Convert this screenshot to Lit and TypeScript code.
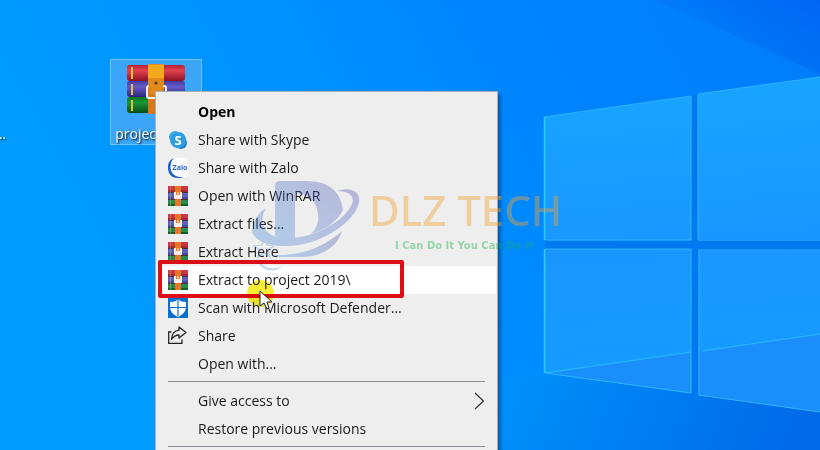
import { LitElement, html, css, svg, nothing } from "lit";
import { customElement } from "lit/decorators.js";
import { classMap } from "lit/directives/class-map.js";

const rarSmall = html`<svg class="glyph" viewBox="0 0 20 20" aria-hidden="true">
  <rect width="20" height="20" fill="#4a3040" />
  <rect y="0" width="20" height="6" fill="#cc3844" />
  <rect y="7" width="20" height="6" fill="#5f62b8" />
  <rect y="14" width="20" height="6" fill="#2a8a48" />
  <rect y="4" width="20" height="2" fill="#a02838" />
  <rect y="11" width="20" height="2" fill="#454a98" />
  <rect y="18" width="20" height="2" fill="#14602c" />
  <rect x="2" width="1" height="20" fill="#b8b070" opacity=".5" />
  <rect x="7" width="6" height="20" fill="#e8762a" />
  <path d="M6 6 H8 V9 H9.500 V6 H10.500 V9 H12 V6 H14 V13 H6Z" fill="#f6efe8" />
</svg>`;

const skype = html`<svg class="glyph" viewBox="0 0 20 20" aria-hidden="true">
  <circle cx="7" cy="7" r="6" fill="#38b0ec" />
  <circle cx="13" cy="13" r="6" fill="#1e7fd0" />
  <circle cx="10" cy="10" r="8" fill="#2b9fe4" />
  <text class="skype-mark" x="10" y="15" text-anchor="middle">S</text>
</svg>`;

const zalo = html`<svg class="glyph" viewBox="0 0 20 20" aria-hidden="true">
  <path d="M6 0 Q-1 3 0 11 Q1 20 10 20 H16 Q5 18 4 11 Q3 4 6 0Z" fill="#1d62c4" />
  <path d="M6 0 H16 Q20 0 20 4 V16 Q20 19 16 19 H11 Q3 17 2.500 10 Q2.500 3 6 0Z" fill="#fdfeff" />
  <text class="zalo-mark" x="12" y="12" text-anchor="middle">Zalo</text>
</svg>`;

const defender = html`<svg class="glyph" viewBox="0 0 20 20" aria-hidden="true">
  <rect width="20" height="20" fill="#0c6fd0" />
  <path d="M10 1.500 Q13 4 18 4 V9 Q18 15 10 19 Q2 15 2 9 V4 Q7 4 10 1.500Z" fill="#fff" />
  <path d="M10 2 V18 M2 9.500 H18" stroke="#0c6fd0" stroke-width="1.200" />
</svg>`;

const share = html`<svg class="glyph" viewBox="0 0 20 20" aria-hidden="true">
  <path d="M3.500 6 H0.700 V17.300 H14 V13.500" fill="none" stroke="#222" stroke-width="1.300" />
  <path d="M11 1 L18 6.500 L11 12 V9 Q6.500 9 3.500 13.500 Q4 5 11 4.200Z" fill="none" stroke="#222" stroke-width="1.300" stroke-linejoin="round" />
</svg>`;

type Entry = { label: string; icon?: unknown; bold?: boolean; hot?: boolean; sub?: boolean } | "line";

const ENTRIES: Entry[] = [
  { label: "Open", bold: true },
  { label: "Share with Skype", icon: skype },
  { label: "Share with Zalo", icon: zalo },
  { label: "Open with WinRAR", icon: rarSmall },
  { label: "Extract files...", icon: rarSmall },
  { label: "Extract Here", icon: rarSmall },
  { label: "Extract to project 2019\\", icon: rarSmall, hot: true },
  { label: "Scan with Microsoft Defender...", icon: defender },
  { label: "Share", icon: share },
  { label: "Open with..." },
  "line",
  { label: "Give access to", sub: true },
  { label: "Restore previous versions" },
  "line",
];

const pane = (d: string) => svg`<path d=${d} fill="url(#pane)" />`;

@customElement("desk-wallpaper")
class DeskWallpaper extends LitElement {
  static styles = css`
    :host { display: block; }
    .art { display: block; width: 100%; height: 100%; }
  `;
  render() {
    return html`<svg class="art" viewBox="0 0 820 450" preserveAspectRatio="xMidYMid slice" aria-hidden="true">
      <defs>
        <linearGradient id="sky" x1="0" y1=".3" x2="1" y2="0">
          <stop offset="0" stop-color="#009cff" />
          <stop offset=".35" stop-color="#0092ff" />
          <stop offset=".65" stop-color="#0084ff" />
          <stop offset="1" stop-color="#007cfa" />
        </linearGradient>
        <linearGradient id="corner" gradientUnits="userSpaceOnUse" x1="730" y1="40" x2="790" y2="-40">
          <stop offset="0" stop-color="#0064f0" stop-opacity=".25" />
          <stop offset="1" stop-color="#0060f0" stop-opacity=".9" />
        </linearGradient>
        <linearGradient id="floor" gradientUnits="userSpaceOnUse" x1="520" y1="370" x2="780" y2="480">
          <stop offset="0" stop-color="#0090fc" />
          <stop offset=".3" stop-color="#0084f4" />
          <stop offset="1" stop-color="#006ae8" />
        </linearGradient>
        <linearGradient id="pane" gradientUnits="userSpaceOnUse" x1="640" y1="90" x2="660" y2="400">
          <stop offset="0" stop-color="#17a4ff" />
          <stop offset=".5" stop-color="#1a97ff" />
          <stop offset="1" stop-color="#169cff" />
        </linearGradient>
      </defs>
      <rect width="820" height="450" fill="url(#sky)" />
      <path d="M655 0 H820 V74Z" fill="url(#corner)" />
      <path d="M498 378 L545 373 L820 412 V450 H498Z" fill="url(#floor)" />
      <path d="M545 241 H820 V249 H545Z M692 96 L698 94 V395 L692 394Z" fill="#0078f0" />
      ${pane("M544 117 L691 96 V240 H544Z")}
      ${pane("M698 94 L820 77 V241 H698Z")}
      ${pane("M544 249 H691 V393 L544 373Z")}
      ${pane("M699 249 H820 V412 L699 395Z")}
      <path d="M545 373 L691 352 V393Z M699 351 L820 333 V412 L699 395Z" fill="#1a8ffc" />
      <path d="M545 373 L691 352 M702 351 L820 334" stroke="#22b0ff" stroke-width="1.500" fill="none" />
      <path d="M544 117 L691 96 V240 H545 M698 240 V94 L820 77 M545 249 H691 V393 L545 373 M699 249 V395 L820 412" stroke="#2cb4ff" stroke-width="1" fill="none" />
      <path d="M544.500 117 V240 M544.500 249 V373" stroke="#2cd0ff" stroke-width="1.500" />
    </svg>`;
  }
}

@customElement("desk-file")
class DeskFile extends LitElement {
  static styles = css`
    :host { display: block; }
    .file {
      display: flex; flex-direction: column; align-items: center; gap: 10px;
      box-sizing: border-box; width: 100%; padding: 4px 0 0;
      border: 1px solid #6cc4ff; background: #3ba5f7;
      font: 14px/20px "Open Sans", "Noto Sans", sans-serif;
      color: #fff; text-shadow: 1px 1px 2px #000;
    }
    .art { width: 60px; height: 50px; }
  `;
  render() {
    return html`<button class="file">
      <svg class="art" viewBox="0 0 60 50" aria-hidden="true">
        <defs>
          <linearGradient id="r" x2="0" y2="1"><stop offset="0" stop-color="#b82035" /><stop offset=".35" stop-color="#e0434f" /><stop offset="1" stop-color="#8e1224" /></linearGradient>
          <linearGradient id="b" x2="0" y2="1"><stop offset="0" stop-color="#4038a0" /><stop offset=".35" stop-color="#665cc8" /><stop offset="1" stop-color="#2c2478" /></linearGradient>
          <linearGradient id="g" x2="0" y2="1"><stop offset="0" stop-color="#0c7024" /><stop offset=".35" stop-color="#1a9638" /><stop offset="1" stop-color="#084c18" /></linearGradient>
        </defs>
        <rect x="1" y="1" width="58" height="16" rx="3" fill="url(#r)" />
        <rect x="1" y="17" width="58" height="16" rx="3" fill="url(#b)" />
        <rect x="1" y="33" width="58" height="16" rx="3" fill="url(#g)" />
        <path d="M6 3V15M6 20V31M6 36V47" stroke="#e8c040" stroke-width="2" />
        <rect x="22" y="0" width="16" height="50" fill="#d8781a" />
        <rect x="21" y="22" width="19" height="12" rx="2" fill="none" stroke="#f2f2f2" stroke-width="2" />
        <path d="M22 0H38V18L36 30H24L22 18Z" fill="#e08a1c" />
        <path d="M22 1H38V14H22Z" fill="#f4a81e" />
        <circle cx="30" cy="19" r="1.500" fill="#5c2c08" />
      </svg>
      <span>project 2019</span>
    </button>`;
  }
}

@customElement("context-menu")
class ContextMenu extends LitElement {
  static styles = css`
    :host { display: block; }
    .menu {
      box-sizing: border-box; margin: 0; padding: 6px 1px; list-style: none;
      background: #eeeeee; border: 1px solid #a6b0ba; box-shadow: 3px 3px 3px #00306080;
      font: 14px/20px "Open Sans", "Noto Sans", sans-serif; color: #1a1a1a;
    }
    .item {
      display: grid; grid-template-columns: 20px 1fr 12px; column-gap: 10px; align-items: center;
      width: 100%; height: 28px; padding: 0 11px; border: 0; background: none;
      font: inherit; color: inherit; text-align: left; white-space: nowrap;
    }
    .bold { font-weight: 700; color: #000; }
    .hot { background: #fff; }
    .label { grid-column: 2; }
    .glyph { display: block; width: 20px; height: 20px; }
    .arrow { width: 12px; height: 18px; }
    .line { height: 1px; margin: 3px 11px 5px; background: #8c9096; }
    .skype-mark { font: 700 13px "Open Sans", sans-serif; fill: #fff; }
    .zalo-mark { font: 700 7px "Open Sans", sans-serif; fill: #2468c8; }
  `;
  render() {
    return html`<ul class="menu" role="menu">
      ${ENTRIES.map((e) =>
        e === "line"
          ? html`<li class="line" role="separator"></li>`
          : html`<li role="none">
              <button role="menuitem" class=${classMap({ item: true, bold: !!e.bold, hot: !!e.hot })}>
                ${e.icon ?? nothing}
                <span class="label">${e.label}</span>
                ${e.sub
                  ? html`<svg class="arrow" viewBox="0 0 12 18" aria-hidden="true">
                      <path d="M2 1 L10.500 9 L2 17" fill="none" stroke="#333" stroke-width="1.200" />
                    </svg>`
                  : nothing}
              </button>
            </li>`
      )}
    </ul>`;
  }
}

@customElement("brand-mark")
class BrandMark extends LitElement {
  static styles = css`
    :host { display: flex; align-items: flex-start; gap: 6px; pointer-events: none; }
    .logo { flex: none; width: 112px; height: 94px; opacity: 0.3; }
    .words { display: flex; flex-direction: column; white-space: nowrap; opacity: 0.42; }
    .name { font: 500 42px/60px "Noto Sans", "Open Sans", sans-serif; color: #f5a030; }
    .motto { padding-left: 26px; font: 700 10px/12px "DejaVu Sans", sans-serif; color: #20b04c; }
  `;
  render() {
    return html`<svg class="logo" viewBox="0 0 112 94" aria-hidden="true">
        <defs>
          <linearGradient id="d" x1="0" y1="1" x2="1" y2="0">
            <stop offset="0" stop-color="#2a80dc" /><stop offset="1" stop-color="#3a3aa8" />
          </linearGradient>
        </defs>
        <path d="M24 6 Q24 1 29 1 H56 C78 1 90 12 92 30 C86 42 74 50 60 54 C66 48 68 42 67 34 C66 22 58 14 44 13 V58 C36 60 30 59 24 56Z" fill="url(#d)" />
        <path d="M1 52 C2 40 8 32 15 28 C8 40 10 52 26 57 C54 63 92 44 101 24 C104 16 98 11 86 11 C100 6 110 12 108 22 C104 44 64 68 32 66 C14 65 4 60 1 52Z" fill="url(#d)" />
        <path d="M24 75 C52 76 74 66 91 51 C86 68 70 77 50 77 H32 Q24 77 24 75Z" fill="url(#d)" />
        <path d="M14 58 L16 65 L23 66 L17 70 L19 77 L13 73 L7 77 L9 70 L3 66 L11 65Z" fill="none" stroke="#2a80dc" stroke-width="1.200" />
        <path d="M6 76 C10 88 20 91 32 86 C21 95 7 90 6 76Z" fill="#2a80dc" />
      </svg>
      <div class="words"><span class="name">DLZ TECH</span><span class="motto">I Can Do It You Can Do It</span></div>`;
  }
}

@customElement("app-root")
class AppRoot extends LitElement {
  static styles = css`
    :host { display: block; }
    .desktop { position: relative; height: 100vh; overflow: hidden; background: #008cff; }
    .wallpaper { position: absolute; inset: 0; }
    .neighbour {
      position: absolute; left: 0; top: 124px; width: 6px; overflow: hidden;
      display: flex; justify-content: flex-end;
      font: 14px/20px "Open Sans", "Noto Sans", sans-serif; color: #fff; text-shadow: 1px 1px 2px #000;
    }
    .file { position: absolute; left: 110px; top: 59px; width: 92px; }
    .menu { position: absolute; left: 155px; top: 91px; width: 343px; }
    .brand { position: absolute; left: 251px; top: 180px; }
    .frame {
      position: absolute; left: 158px; top: 260px; width: 246px; height: 38px;
      box-sizing: border-box; border: 4px solid #dc0f16; border-radius: 2px;
    }
    .halo { position: absolute; left: 247px; top: 280px; width: 27px; height: 27px; border-radius: 50%; background: #f8ea00; opacity: 0.8; mix-blend-mode: multiply; }
    .cursor { position: absolute; left: 259px; top: 290px; width: 14px; height: 20px; }
  `;
  render() {
    return html`<main class="desktop">
      <desk-wallpaper class="wallpaper"></desk-wallpaper>
      <span class="neighbour">...</span>
      <desk-file class="file"></desk-file>
      <context-menu class="menu"></context-menu>
      <brand-mark class="brand"></brand-mark>
      <div class="frame"></div>
      <div class="halo"></div>
      <svg class="cursor" viewBox="0 0 14 20" aria-hidden="true">
        <path d="M1 1 V16 L5 13 L8 19 L10 18 L8 12 H13Z" fill="#fff" stroke="#222" stroke-width="1" />
      </svg>
    </main>`;
  }
}
